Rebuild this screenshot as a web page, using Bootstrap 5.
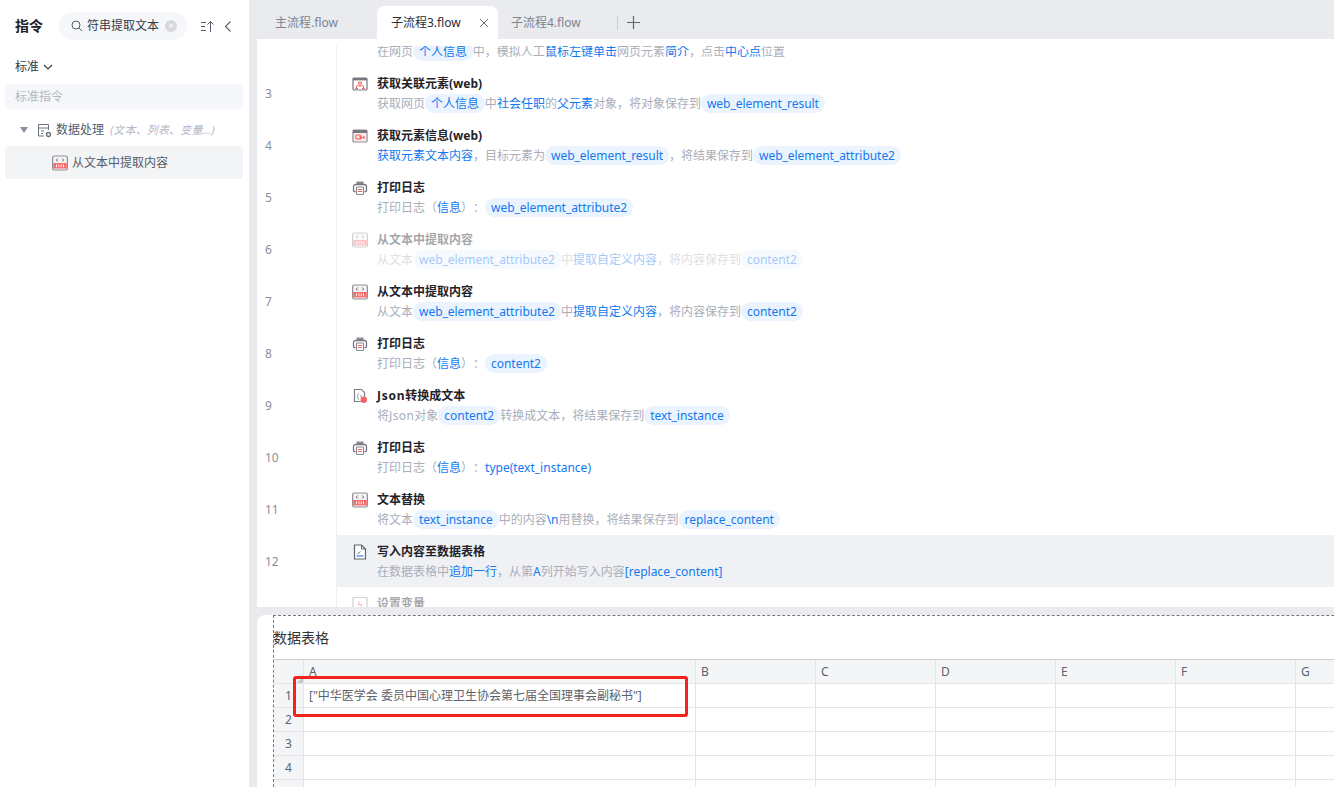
<!DOCTYPE html>
<html lang="zh">
<head>
<meta charset="utf-8">
<title>flow</title>
<link rel="stylesheet" href="https://cdn.jsdelivr.net/npm/bootstrap@5.3.0/dist/css/bootstrap.min.css">
<style>
html,body{height:787px;overflow:hidden}
body{background:#eaebef;font-family:"Noto Sans","Noto Sans CJK SC",sans-serif;font-size:12px;color:#1f2329;line-height:18px;text-spacing-trim:space-all}
.side-pane{width:249px;background:#fff}
.side-head{height:56px;padding:12px 0 0 15px}
.side-title{font-size:14px;font-weight:700;width:44px;line-height:28px}
.search-pill{width:128px;height:28px;border-radius:14px;background:#f6f7fa;padding-left:12px;color:#333b47;white-space:nowrap}
.search-ico{margin-right:4px}
.clear-dot{width:12px;height:12px;border-radius:50%;background:#d6d8dc;color:#fff;font-size:9px;line-height:12px;text-align:center;margin-left:6px}
.side-tool{margin-left:13px}
.side-back{margin-left:10px}
.std-toggle{padding-left:15px;height:22px;color:#333b47}
.side-input{margin:6px 6px 0 5px;height:25px;border-radius:4px;background:#f6f7fb;color:#b3b7c1;padding-left:10px;line-height:25px}
.tree-row{height:28px;margin-top:7px;padding-left:20px;color:#555c69}
.tree-caret{width:0;height:0;border:4px solid transparent;border-top:6px solid #8a90a0;border-bottom:0;margin-right:9px}
.tree-hint{font-style:italic;font-size:11px;letter-spacing:.15px;color:#b3b7c4;margin-left:6px}
.tree-sel{height:33px;margin:2px 6px 0 5px;border-radius:4px;background:#f3f4f6;padding-left:47px;color:#555c69}
.tab-strip{height:39px;padding-top:6px;position:relative}
.tab-item{height:33px;line-height:33px;color:#7d8491;white-space:nowrap}
.tab-one{margin-left:26px;width:102px}
.tab-on{width:121px;background:#fff;border-radius:8px 8px 0 0;color:#2a2f38;padding-left:14px}
.tab-close{margin-left:auto;margin-right:8px;width:12px;height:12px}
.tab-three{margin-left:13px;width:106px}
.tab-sep{width:1px;height:14px;background:#c9ccd3;margin:10px 9px 0 0}
.tab-plus{margin-top:10px}
.flow-pane{margin-left:8px;height:568px;background:#fff;padding-top:7px;overflow:hidden}
.flow-scroll{height:561px;overflow:hidden}
.flow-list{margin-top:-31px}
.step{height:52px}
.step-no{width:80px;padding:2px 0 0 8px;color:#8a8f99;border-right:1px solid #eeeff2;flex-shrink:0}
.step-body{flex:1;padding:8px 0 0 15px;min-width:0;white-space:nowrap}
.step-ico{width:16px;height:16px;margin:1px 9px 0 0;flex-shrink:0}
.step-title{font-weight:700;color:#1f2329;height:18px}
.step-desc{color:#a9aeb9;height:19px;line-height:19px;margin-top:1px}
.lnk{color:#1279ee}
.chip{display:inline-block;height:19px;line-height:19px;padding:0 6px;border-radius:10px;background:#ebf3fe;color:#1279ee;letter-spacing:-.04px}
.json-word{letter-spacing:.75px}
.json-thin{letter-spacing:.4px}
.step-on .step-body{background:#f0f1f5}
.step-fade .step-body{opacity:.4}
.pane-gap{height:8px}
.sheet-pane{margin-left:8px;height:172px;background:#fff;border-radius:8px 0 0 0;padding-left:16px;overflow:hidden}
.sheet-frame{height:172px;border-left:1px dashed #777;border-top:1px dashed #777;position:relative;margin-right:-200px}
.sheet-title{font-size:14px;line-height:21px;height:43px;padding-top:11px;margin-left:-1px;color:#333}
.sheet-grid{table-layout:fixed;width:1142px;border-collapse:separate;border-spacing:0;border-top:1px solid #d0d0d2;color:#5c626c}
.sheet-grid th,.sheet-grid td{height:24px;padding:0 0 0 5px;border-right:1px solid #e4e4e6;border-bottom:1px solid #e4e4e6;font-weight:400;line-height:22px;white-space:nowrap}
.sheet-grid th{background:#f4f5f7}
.sheet-grid .rowno{background:#f4f5f7;padding:0;text-align:center;color:#5c6472}
.sheet-grid .corner{background:linear-gradient(135deg,transparent 88%,#c4c7cc 88%) #f4f5f7}
.red-mark{position:absolute;left:19px;top:60px;width:395px;height:41px;border:3px solid #f3231c;border-radius:3px;pointer-events:none}
</style>
</head>
<body class="d-flex">
<svg width="0" height="0" class="position-absolute">
<symbol id="i-web" viewBox="0 0 16 16"><rect x="1" y="2" width="14" height="12" rx="1" fill="#fff" stroke="#77787e" stroke-width="1.2"/><rect x="1" y="2" width="14" height="2.4" fill="#77787e"/><path d="M6.500 6h3v2h-3zM8 8v1.800M4.500 12V9.800h7V12M3 12.500h3M10 12.500h3" fill="none" stroke="#f46a6a" stroke-width="1"/></symbol>
<symbol id="i-get" viewBox="0 0 16 16"><rect x="1" y="2" width="14" height="12" rx="1" fill="#fbeeee" stroke="#8d8d92" stroke-width="1.2"/><rect x="1" y="2" width="14" height="3" fill="#77787e"/><path d="M4 7h4v4H4zM9 7.500v4M9 9.500h3M12 8v3" fill="none" stroke="#f25f5f" stroke-width="1.100"/></symbol>
<symbol id="i-print" viewBox="0 0 16 16"><path d="M4.500 1.500h7v3h-7z" fill="#8b8c91"/><path d="M3.500 11.500H2.500a1 1 0 0 1-1-1v-4a2 2 0 0 1 2-2h9a2 2 0 0 1 2 2v4a1 1 0 0 1-1 1h-1" fill="none" stroke="#77787e" stroke-width="1.300"/><rect x="4.500" y="7" width="7" height="7.500" rx=".7" fill="#fff" stroke="#8b8c91" stroke-width="1.200"/><path d="M6 9.500h4M6 11.500h4" stroke="#f25f5f" stroke-width="1"/></symbol>
<symbol id="i-code" viewBox="0 0 16 16"><rect x=".6" y="1" width="14.800" height="14" rx="1.500" fill="#f4f4f5" stroke="#8f8f95" stroke-width="1.200"/><path d="M5.800 3.500 4.300 5l1.500 1.500M10.200 3.500 11.700 5l-1.500 1.500" fill="none" stroke="#55565c" stroke-width=".9"/><rect x="1.300" y="8" width="13.400" height="5.500" fill="#f86a6a"/><path d="M4.500 9.300v3M7 9.300v3M9.300 9.300v3M11.500 9.300v3" stroke="#fff" stroke-width=".9"/></symbol>
<symbol id="i-json" viewBox="0 0 16 16"><path d="M2.500 1.500h7l3 3v9h-10z" fill="#fff" stroke="#7e7f85" stroke-width="1.200"/><path d="M7 5.500c-1.500 0-.5 2.500-1.800 3 1.300.5.300 3 1.800 3M9 7v2.500" fill="none" stroke="#7e7f85" stroke-width=".9"/><circle cx="11.800" cy="11.800" r="3.200" fill="#f6626a"/></symbol>
<symbol id="i-doc" viewBox="0 0 16 16"><path d="M2.500 1h7l4 4v10h-11z" fill="#fff" stroke="#5e6470" stroke-width="1.200"/><path d="M9.500 1v4h4" fill="none" stroke="#5e6470" stroke-width="1"/><path d="M4.500 12h7" stroke="#6f9cf0" stroke-width="1.600"/><path d="M5.500 10l3-2.500" stroke="#5e6470" stroke-width=".9"/></symbol>
<symbol id="i-var" viewBox="0 0 16 16"><rect x="1" y="1.500" width="14" height="13" rx="1" fill="#fff" stroke="#8d8d92" stroke-width="1.200"/><path d="M8 5l-2 3.500h4L8 12" fill="none" stroke="#f25f5f" stroke-width="1"/></symbol>
</svg>

<aside class="side-pane flex-shrink-0">
  <div class="side-head d-flex align-items-start">
    <div class="side-title">指令</div>
    <div class="search-pill d-flex align-items-center">
      <svg width="12" height="12" viewBox="0 0 12 12" class="search-ico flex-shrink-0"><circle cx="5" cy="5" r="4" fill="none" stroke="#555c69"/><path d="M8 8l3.200 3.200" stroke="#555c69"/></svg>
      <span>符串提取文本</span>
      <span class="clear-dot flex-shrink-0">×</span>
    </div>
    <svg class="side-tool mt-2" width="14" height="13" viewBox="0 0 14 13"><path d="M1 2.500h5M1 6.500h4M1 10.500h5M10.500 12V1.500M7.500 4.500l3-3 3 3" fill="none" stroke="#555c69"/></svg>
    <svg class="side-back mt-2" width="8" height="13" viewBox="0 0 8 13"><path d="M6.500 1.500l-5 5 5 5" fill="none" stroke="#555c69" stroke-width="1.100"/></svg>
  </div>
  <div class="std-toggle d-flex align-items-center">标准
    <svg class="ms-1" width="10" height="6" viewBox="0 0 10 6"><path d="M1 1l4 4 4-4" fill="none" stroke="#333b47" stroke-width="1.100"/></svg>
  </div>
  <div class="side-input">标准指令</div>
  <div class="tree-row d-flex align-items-center">
    <span class="tree-caret"></span>
    <svg width="15" height="15" viewBox="0 0 15 15" class="me-1 flex-shrink-0"><path d="M7 13H1.500V1.500h10V7M1.500 5h10M4 8h3M4 10.500h2" fill="none" stroke="#6b7280"/><circle cx="11.500" cy="11.500" r="2" fill="none" stroke="#6b7280" stroke-width="1.400"/></svg>
    <span>数据处理</span><span class="tree-hint">(文本、列表、变量...)</span>
  </div>
  <div class="tree-sel d-flex align-items-center">
    <svg width="16" height="16" class="me-1 flex-shrink-0"><use href="#i-code"/></svg><span>从文本中提取内容</span>
  </div>
</aside>

<main class="flex-grow-1 d-flex flex-column overflow-hidden">
  <div class="tab-strip d-flex">
    <div class="tab-item tab-one">主流程.flow</div>
    <div class="tab-item tab-on d-flex align-items-center">子流程3.flow
      <svg class="tab-close" viewBox="0 0 12 12"><path d="M2 2l8 8M10 2l-8 8" stroke="#6b7280" fill="none"/></svg>
    </div>
    <div class="tab-item tab-three">子流程4.flow</div>
    <div class="tab-sep"></div>
    <svg class="tab-plus" width="13" height="13" viewBox="0 0 13 13"><path d="M6.500 0v13M0 6.500h13" stroke="#5f6672" stroke-width="1.200"/></svg>
  </div>

  <section class="flow-pane">
    <div class="flow-scroll">
      <div class="flow-list">
        <div class="step d-flex"><div class="step-no d-flex align-items-center"></div><div class="step-body d-flex"><div class="step-ico"></div><div><div class="step-title"></div><div class="step-desc">在网页<span class="chip">个人信息</span>中，模拟人工<span class="lnk">鼠标左键单击</span>网页元素<span class="lnk">简介</span>，点击<span class="lnk">中心点</span>位置</div></div></div></div>
        <div class="step d-flex"><div class="step-no d-flex align-items-center">3</div><div class="step-body d-flex"><svg class="step-ico"><use href="#i-web"/></svg><div><div class="step-title">获取关联元素(web)</div><div class="step-desc">获取网页<span class="chip">个人信息</span>中<span class="lnk">社会任职</span>的<span class="lnk">父元素</span>对象，将对象保存到<span class="chip">web_element_result</span></div></div></div></div>
        <div class="step d-flex"><div class="step-no d-flex align-items-center">4</div><div class="step-body d-flex"><svg class="step-ico"><use href="#i-get"/></svg><div><div class="step-title">获取元素信息(web)</div><div class="step-desc"><span class="lnk">获取元素文本内容</span>，目标元素为<span class="chip">web_element_result</span>，将结果保存到<span class="chip">web_element_attribute2</span></div></div></div></div>
        <div class="step d-flex"><div class="step-no d-flex align-items-center">5</div><div class="step-body d-flex"><svg class="step-ico"><use href="#i-print"/></svg><div><div class="step-title">打印日志</div><div class="step-desc">打印日志（<span class="lnk">信息</span>）：<span class="chip">web_element_attribute2</span></div></div></div></div>
        <div class="step step-fade d-flex"><div class="step-no d-flex align-items-center">6</div><div class="step-body d-flex"><svg class="step-ico"><use href="#i-code"/></svg><div><div class="step-title">从文本中提取内容</div><div class="step-desc">从文本<span class="chip">web_element_attribute2</span>中<span class="lnk">提取自定义内容</span>，将内容保存到<span class="chip">content2</span></div></div></div></div>
        <div class="step d-flex"><div class="step-no d-flex align-items-center">7</div><div class="step-body d-flex"><svg class="step-ico"><use href="#i-code"/></svg><div><div class="step-title">从文本中提取内容</div><div class="step-desc">从文本<span class="chip">web_element_attribute2</span>中<span class="lnk">提取自定义内容</span>，将内容保存到<span class="chip">content2</span></div></div></div></div>
        <div class="step d-flex"><div class="step-no d-flex align-items-center">8</div><div class="step-body d-flex"><svg class="step-ico"><use href="#i-print"/></svg><div><div class="step-title">打印日志</div><div class="step-desc">打印日志（<span class="lnk">信息</span>）：<span class="chip">content2</span></div></div></div></div>
        <div class="step d-flex"><div class="step-no d-flex align-items-center">9</div><div class="step-body d-flex"><svg class="step-ico"><use href="#i-json"/></svg><div><div class="step-title"><span class="json-word">Json</span>转换成文本</div><div class="step-desc">将<span class="json-thin">Json</span>对象<span class="chip">content2</span>转换成文本，将结果保存到<span class="chip">text_instance</span></div></div></div></div>
        <div class="step d-flex"><div class="step-no d-flex align-items-center">10</div><div class="step-body d-flex"><svg class="step-ico"><use href="#i-print"/></svg><div><div class="step-title">打印日志</div><div class="step-desc">打印日志（<span class="lnk">信息</span>）：<span class="lnk">type(text_instance)</span></div></div></div></div>
        <div class="step d-flex"><div class="step-no d-flex align-items-center">11</div><div class="step-body d-flex"><svg class="step-ico"><use href="#i-code"/></svg><div><div class="step-title">文本替换</div><div class="step-desc">将文本<span class="chip">text_instance</span>中的内容<span class="lnk">\n</span>用替换，将结果保存到<span class="chip">replace_content</span></div></div></div></div>
        <div class="step step-on d-flex"><div class="step-no d-flex align-items-center">12</div><div class="step-body d-flex"><svg class="step-ico"><use href="#i-doc"/></svg><div><div class="step-title">写入内容至数据表格</div><div class="step-desc">在数据表格中<span class="lnk">追加一行</span>，从第<span class="lnk">A</span>列开始写入内容<span class="lnk">[replace_content]</span></div></div></div></div>
        <div class="step step-fade d-flex"><div class="step-no d-flex align-items-center"></div><div class="step-body d-flex"><svg class="step-ico"><use href="#i-var"/></svg><div><div class="step-title">设置变量</div></div></div></div>
      </div>
    </div>
  </section>

  <div class="pane-gap"></div>

  <section class="sheet-pane">
    <div class="sheet-frame">
      <div class="sheet-title">数据表格</div>
      <table class="sheet-grid">
        <colgroup><col style="width:30px"><col style="width:392px"><col style="width:120px"><col style="width:120px"><col style="width:120px"><col style="width:120px"><col style="width:120px"><col style="width:120px"></colgroup>
        <thead><tr><th class="corner"></th><th>A</th><th>B</th><th>C</th><th>D</th><th>E</th><th>F</th><th>G</th></tr></thead>
        <tbody>
          <tr><td class="rowno">1</td><td>["中华医学会 委员中国心理卫生协会第七届全国理事会副秘书"]</td><td></td><td></td><td></td><td></td><td></td><td></td></tr>
          <tr><td class="rowno">2</td><td></td><td></td><td></td><td></td><td></td><td></td><td></td></tr>
          <tr><td class="rowno">3</td><td></td><td></td><td></td><td></td><td></td><td></td><td></td></tr>
          <tr><td class="rowno">4</td><td></td><td></td><td></td><td></td><td></td><td></td><td></td></tr>
          <tr><td class="rowno"></td><td></td><td></td><td></td><td></td><td></td><td></td><td></td></tr>
        </tbody>
      </table>
      <div class="red-mark"></div>
    </div>
  </section>
</main>
<script src="https://cdn.jsdelivr.net/npm/bootstrap@5.3.0/dist/js/bootstrap.bundle.min.js"></script>
</body>
</html>
